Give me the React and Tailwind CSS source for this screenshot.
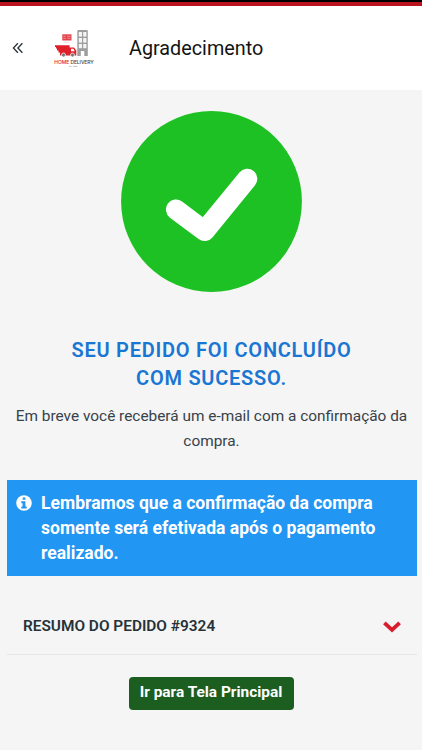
const BackIcon = () => (
  <svg
    width="12"
    height="12"
    viewBox="0 0 12 12"
    fill="none"
    stroke="#263238"
    strokeWidth="1.3"
  >
    <path d="M5.9 1.2 L1.4 6 L5.9 10.8 M10.4 1.2 L5.9 6 L10.4 10.8" />
  </svg>
);

const InfoIcon = () => (
  <svg className="mt-1 h-4 w-4 shrink-0" viewBox="0 0 16 16">
    <circle cx="8" cy="8" r="7.8" fill="#fff" />
    <path
      d="M6.7 2.4 H9.4 V4.8 H6.7 Z M5.3 6.2 H9.4 V11.4 H10.7 V13.4 H5.3 V11.4 H6.6 V8.2 H5.3 Z"
      fill="#2196f3"
    />
  </svg>
);

const Logo = () => (
  <svg width="42" height="42" viewBox="0 0 42 42">
    {/* building */}
    <path
      d="M23.3 1.8 L24 1 H33 L33.8 1.8 V27 H30.3 V22 H26.8 V27 H23.3 Z"
      fill="#9e9e9e"
    />
    <g fill="#f4f4f4">
      <rect x="24.8" y="3" width="3.2" height="4.6" />
      <rect x="29.2" y="3" width="3.2" height="4.6" />
      <rect x="24.8" y="9" width="3.2" height="4.6" />
      <rect x="29.2" y="9" width="3.2" height="4.6" />
      <rect x="24.8" y="15" width="3.2" height="4.2" />
      <rect x="29.2" y="15" width="3.2" height="4.2" />
    </g>
    {/* sign */}
    <rect x="8.3" y="5.3" width="9.2" height="6.2" fill="#e2444b" />
    <path
      d="M9.3 7.3 H11.5 M13 7.3 H16.5 M9.3 9.3 H12 M13.5 9.3 H16.5"
      stroke="#f7c3c5"
      strokeWidth="0.6"
    />
    <path d="M9.5 13.3 H15.5" stroke="#d8d8d8" strokeWidth="0.7" />
    {/* truck */}
    <path
      d="M1 16.3 H15.6 V18.6 H20 L22.3 21.5 V26.6 H6 V23.5 H4.5 V21.5 H3 V19.5 H2 V18 H1 Z"
      fill="#df202a"
    />
    <path d="M17 19.8 H19.3 L20.8 22.3 H17 Z" fill="#fff" />
    <circle cx="9.5" cy="26" r="2" fill="#777" stroke="#fff" strokeWidth="0.7" />
    <circle cx="18.5" cy="26" r="2" fill="#777" stroke="#fff" strokeWidth="0.7" />
    <text
      x="0.3"
      y="34.6"
      fontFamily="Inter, sans-serif"
      fontSize="5"
      fontWeight="500"
      textLength="39.5"
      fill="#444"
    >
      <tspan fill="#df202a">HOME</tspan> DELIVERY
    </text>
    <path d="M15 37.4 H17.5 M18.8 37.4 H23.5" stroke="#b5b5b5" strokeWidth="0.8" />
  </svg>
);

const Header = () => (
  <header className="flex h-[84px] items-center bg-white">
    <button className="ml-3 w-3" aria-label="Voltar">
      <BackIcon />
    </button>
    <div className="ml-[30px] mt-[3px] w-[42px]">
      <Logo />
    </div>
    <h1 className="ml-[33px] pt-0.5 text-[19.8px] leading-7 text-[#141414]">
      Agradecimento
    </h1>
  </header>
);

const SuccessIcon = () => (
  <svg className="mx-auto" width="182" height="182" viewBox="0 0 182 182">
    <circle cx="91.5" cy="91.5" r="90.4" fill="#1ec123" />
    <path
      d="M56 99.6 L84.6 121 L127.2 68.8"
      fill="none"
      stroke="#fff"
      strokeWidth="20.2"
      strokeLinecap="round"
      strokeLinejoin="round"
    />
  </svg>
);

const OrderSummary = ({ number }) => (
  <div className="ml-[7px] mr-[5px] mt-[21px] flex h-[58px] items-center justify-between border-b border-[#e6e6e6] pl-4 pr-4 pt-[3px]">
    <span className="text-[15.4px] font-semibold text-[#263238]">
      RESUMO DO PEDIDO #{number}
    </span>
    <svg width="18" height="12" viewBox="0 0 18 12">
      <path
        d="M1.4 1.8 L9 9 L16.6 1.8"
        fill="none"
        stroke="#d91f2f"
        strokeWidth="3.8"
      />
    </svg>
  </div>
);

const App = () => {
  return (
    <div className="min-h-[750px] bg-[#f5f5f5] font-['Roboto',sans-serif]">
      <div className="h-[2px] bg-black" />
      <div className="h-1 bg-[#b9141f]" />
      <Header />

      <main>
        <div className="pt-5">
          <SuccessIcon />
        </div>

        <h2 className="mt-[44px] pl-px text-center text-[20px] font-semibold leading-7 tracking-[0.75px] text-[#1976d2]">
          SEU PEDIDO FOI CONCLUÍDO
          <br />
          COM SUCESSO.
        </h2>
        <p className="mt-3 pl-px text-center text-[15.4px] leading-[25px] text-[#37424a]">
          Em breve você receberá um e-mail com a confirmação da
          <br />
          compra.
        </p>

        <div className="ml-[7px] mr-[5px] mt-[26px] flex h-[96px] bg-[#2196f3] pl-[9px] pt-[11px] text-white">
          <InfoIcon />
          <p className="ml-[9px] whitespace-nowrap text-[17.55px] font-bold leading-[25px]">
            Lembramos que a confirmação da compra
            <br />
            somente será efetivada após o pagamento
            <br />
            realizado.
          </p>
        </div>

        <OrderSummary number={9324} />

        <button className="mx-auto mt-[22px] flex h-[33px] w-[165px] items-center justify-center rounded bg-[#1b5e20] pb-0.5 text-[15.4px] font-bold text-white">
          Ir para Tela Principal
        </button>
      </main>
    </div>
  );
};

export default App;
